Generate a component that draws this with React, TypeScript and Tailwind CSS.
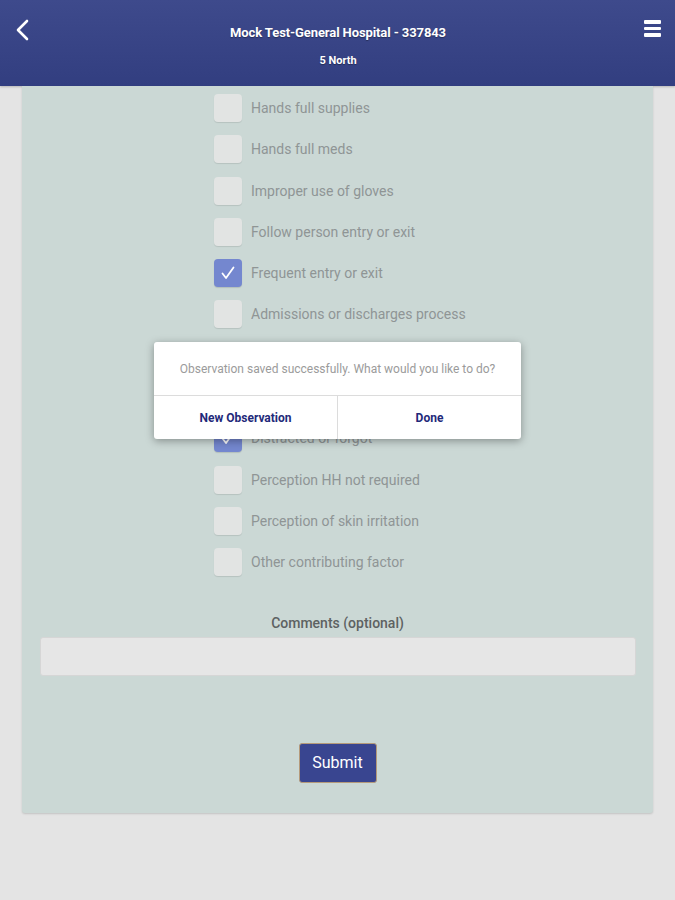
import React from "react";

// labels of the two rows that sit fully under the dialog are not visible
const items = [
  { label: "Hands full supplies", checked: false },
  { label: "Hands full meds", checked: false },
  { label: "Improper use of gloves", checked: false },
  { label: "Follow person entry or exit", checked: false },
  { label: "Frequent entry or exit", checked: true },
  { label: "Admissions or discharges process", checked: false },
  { label: "", checked: false },
  { label: "", checked: false },
  { label: "Distracted or forgot", checked: true },
  { label: "Perception HH not required", checked: false },
  { label: "Perception of skin irritation", checked: false },
  { label: "Other contributing factor", checked: false },
];

function Checkbox({ checked }: { checked: boolean }) {
  if (checked) {
    return (
      <span className="flex h-[28px] w-[28px] shrink-0 items-center justify-center rounded-[4px] bg-[#7487cf] text-white shadow-[0_1px_1px_rgba(0,0,0,0.12)]">
        <svg width="16" height="16" viewBox="0 0 16 16" fill="none">
          <path d="M2.5 8.5l3.5 4.5L13.5 2.5" stroke="white" strokeWidth="1.8" strokeLinecap="round" strokeLinejoin="round" />
        </svg>
      </span>
    );
  }
  return <span className="h-[28px] w-[28px] shrink-0 rounded-[4px] bg-[#e2e4e3] shadow-[0_1px_1px_rgba(0,0,0,0.1)]" />;
}

export default function App() {
  return (
    <div className="relative min-h-[900px] bg-[#e4e4e4] font-['Roboto','Liberation_Sans',sans-serif]">
      <header className="flex h-[86px] items-start justify-between bg-gradient-to-b from-[#3e4a8c] to-[#323e80] px-[14px] pt-[18px] text-white shadow-[0_1px_2px_rgba(0,0,0,0.2)]">
        <svg width="18" height="22" viewBox="0 0 18 22" fill="none" className="mt-[1px]">
          <path d="M13 2L4 11l9 9" stroke="white" strokeWidth="2.6" strokeLinecap="round" strokeLinejoin="round" />
        </svg>
        <div className="flex flex-col items-center pt-[6px] [text-shadow:0_1px_1px_rgba(0,0,0,0.35)]">
          <span className="text-[13px] font-bold leading-[18px] tracking-[-0.1px]">Mock Test-General Hospital - 337843</span>
          <span className="mt-[12px] text-[11px] font-bold leading-[14px]">5 North</span>
        </div>
        <div className="mt-[2px] flex w-[17px] flex-col gap-[3px]">
          <span className="h-[3.5px] rounded-[1px] bg-white" />
          <span className="h-[3.5px] rounded-[1px] bg-white" />
          <span className="h-[3.5px] rounded-[1px] bg-white" />
        </div>
      </header>

      <main className="mx-[22px] flex h-[727px] flex-col rounded-b-[3px] bg-[#cbd8d5] shadow-[0_1px_2px_rgba(0,0,0,0.15)]">
        <ul className="flex flex-col gap-[13.3px] pt-[8px] pl-[192px]">
          {items.map((it, i) => (
            <li key={i} className="flex h-[28px] items-center gap-[9px]">
              <Checkbox checked={it.checked} />
              <span className="text-[14px] leading-[18px] text-[#8f9595]">{it.label}</span>
            </li>
          ))}
        </ul>

        <div className="mt-[38px] flex flex-col items-center">
          <label className="text-[14px] font-medium leading-[18px] text-[#5d6262]">Comments (optional)</label>
          <div className="mt-[5px] h-[39px] w-[596px] rounded-[3px] border border-[#d6d6d6] bg-[#e6e6e6]" />
          <button className="mt-[67px] h-[40px] w-[78px] rounded-[3px] border border-[#b59a7a] bg-[#394590] text-[16px] text-white">
            Submit
          </button>
        </div>
      </main>

      <div className="absolute left-[154px] top-[342px] flex w-[367px] flex-col rounded-[3px] bg-white shadow-[0_2px_8px_rgba(0,0,0,0.35)]">
        <p className="flex h-[53px] items-center justify-center text-[12px] text-[#9b9b9b]">
          Observation saved successfully. What would you like to do?
        </p>
        <div className="flex h-[44px] border-t border-[#dcdcdc]">
          <button className="flex-1 text-[12px] font-bold text-[#1f2a7a]">New Observation</button>
          <span className="w-px bg-[#dcdcdc]" />
          <button className="flex-1 text-[12px] font-bold text-[#1f2a7a]">Done</button>
        </div>
      </div>
    </div>
  );
}
